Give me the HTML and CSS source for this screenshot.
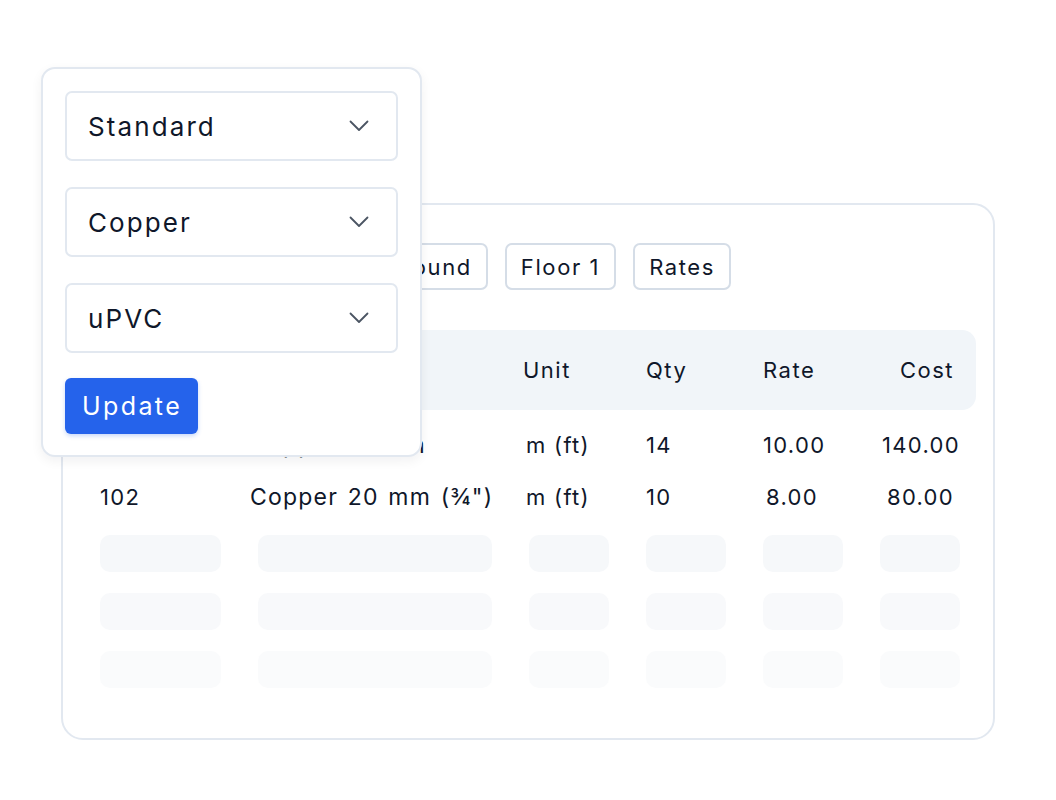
FILE: index.html
```html
<!DOCTYPE html>
<html lang="en">
<head>
    <meta charset="UTF-8">
    <meta name="viewport" content="width=device-width, initial-scale=1.0">
    <title>Estimate</title>
    <link rel="stylesheet" href="styles.css">
</head>
<body>

<div class="stage">
    <div class="sheet">
        <div class="tabs">
            <span class="tab">Summary</span>
            <span class="tab">Ground</span>
            <span class="tab">Floor 1</span>
            <span class="tab">Rates</span>
        </div>

        <div class="cols head">
            <span>Code</span>
            <span>Description</span>
            <span>Unit</span>
            <span>Qty</span>
            <span>Rate</span>
            <span class="cost-head">Cost</span>
        </div>

        <div class="cols row first">
            <span>101</span>
            <span class="desc">Copper 15 mm</span>
            <span class="unit">m (ft)</span>
            <span>14</span>
            <span>10.00</span>
            <span class="cost">140.00</span>
        </div>
        <div class="cols row">
            <span>102</span>
            <span class="desc">Copper 20 mm (¾")</span>
            <span class="unit">m (ft)</span>
            <span>10</span>
            <span class="rate">8.00</span>
            <span class="cost wide">80.00</span>
        </div>

        <div class="cols skeleton">
            <i></i><i></i><i></i><i></i><i></i><i></i>
        </div>
        <div class="cols skeleton fade1">
            <i></i><i></i><i></i><i></i><i></i><i></i>
        </div>
        <div class="cols skeleton fade2">
            <i></i><i></i><i></i><i></i><i></i><i></i>
        </div>
    </div>

    <div class="panel">
        <div class="select">
            <span>Standard</span>
            <svg width="20" height="12" viewBox="0 0 20 12"><path d="M1.5 1.5L10 10l8.5-8.5" fill="none" stroke="#4b5563" stroke-width="1.8" stroke-linecap="round" stroke-linejoin="round"/></svg>
        </div>
        <div class="select">
            <span>Copper</span>
            <svg width="20" height="12" viewBox="0 0 20 12"><path d="M1.5 1.5L10 10l8.5-8.5" fill="none" stroke="#4b5563" stroke-width="1.8" stroke-linecap="round" stroke-linejoin="round"/></svg>
        </div>
        <div class="select">
            <span>uPVC</span>
            <svg width="20" height="12" viewBox="0 0 20 12"><path d="M1.5 1.5L10 10l8.5-8.5" fill="none" stroke="#4b5563" stroke-width="1.8" stroke-linecap="round" stroke-linejoin="round"/></svg>
        </div>
        <button class="update">Update</button>
    </div>
</div>

</body>
</html>
```

FILE: styles.css
```css
body {
    margin: 0;
    font-family: Inter, "Noto Sans", sans-serif;
    color: #0f172a;
    background: #fff;
}
.stage {
    position: relative;
    width: 1056px;
    height: 800px;
    padding: 203px 0 0 61px;
    box-sizing: border-box;
}
.sheet {
    width: 934px;
    height: 537px;
    box-sizing: border-box;
    border: 2px solid #e2e8f0;
    border-radius: 22px;
    padding: 38px 33px 0 37px;
}
.tabs {
    display: flex;
    justify-content: flex-end;
    gap: 17px;
    padding-right: 229px;
}
.tab {
    display: inline-flex;
    align-items: center;
    height: 47px;
    box-sizing: border-box;
    padding: 0 14px 0 14px;
    border: 2px solid #d5dde7;
    border-radius: 7px;
    font-size: 22px;
    letter-spacing: 1.6px;
}
.cols {
    display: grid;
    grid-template-columns: 121px 234px 80px 80px 80px 80px;
    column-gap: 37px;
    align-items: center;
}
.head {
    margin: 40px -16px 0 -18px;
    padding: 0 16px 0 18px;
    height: 80px;
    background: #f1f5f9;
    border-radius: 14px;
    font-size: 22px;
    letter-spacing: 1.5px;
}
.head span:nth-child(2) {
    margin-left: -8px;
}
.head span:nth-child(3) {
    margin-left: -6px;
}
.cost-head {
    text-align: right;
    margin-right: 6px;
}
.row {
    height: 52px;
    font-size: 22px;
    letter-spacing: 1.3px;
}
.row.first {
    margin-top: 9px;
}
.row .desc {
    margin-left: -8px;
    white-space: nowrap;
    font-size: 23px;
    letter-spacing: 1.2px;
    word-spacing: 2px;
}
.row .unit {
    margin-left: -3px;
    white-space: nowrap;
}
.rate {
    padding-left: 3px;
}
.cost {
    margin-left: 2px;
}
.cost.wide {
    margin-left: 7px;
}
.skeleton {
    margin-top: 21px;
}
.row + .skeleton {
    margin-top: 12px;
}
.skeleton i {
    display: block;
    height: 37px;
    background: #f6f8fa;
    border-radius: 10px;
}
.fade1 i {
    background: #f8f9fb;
}
.fade2 i {
    background: #fafbfc;
}
.panel {
    position: absolute;
    left: 41px;
    top: 67px;
    width: 381px;
    box-sizing: border-box;
    padding: 22px 22px 21px 22px;
    background: #fff;
    border: 2px solid #e2e8f0;
    border-radius: 14px;
    box-shadow: 0 4px 12px rgba(15, 23, 42, 0.06);
    display: flex;
    flex-direction: column;
    align-items: flex-start;
    gap: 26px;
}
.select {
    width: 100%;
    height: 70px;
    box-sizing: border-box;
    border: 2px solid #e2e8f0;
    border-radius: 7px;
    padding: 0 27px 0 21px;
    display: flex;
    align-items: center;
    justify-content: space-between;
    font-size: 26px;
    letter-spacing: 2.1px;
}
.update {
    margin-top: -1px;
    height: 56px;
    padding: 0 16px 0 17px;
    border: none;
    border-radius: 6px;
    background: #2563eb;
    color: #fff;
    font-family: inherit;
    font-size: 25px;
    letter-spacing: 2.4px;
    box-shadow: 0 2px 4px rgba(37, 99, 235, 0.25);
}
```
